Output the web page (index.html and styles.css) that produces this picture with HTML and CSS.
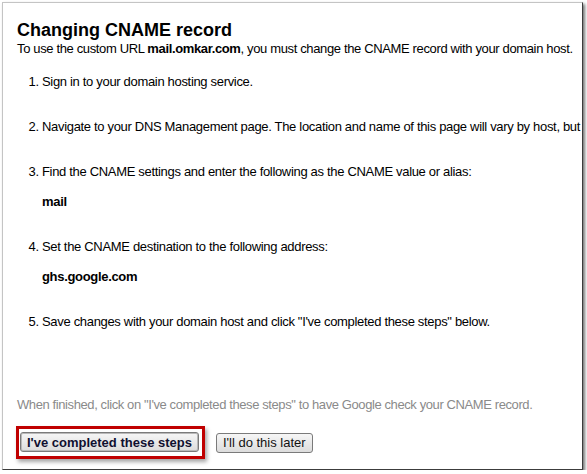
FILE: index.html
```html
<!DOCTYPE html>
<html lang="en">

<head>
    <meta charset="UTF-8">
    <title>Changing CNAME record</title>
    <link rel="stylesheet" href="styles.css">
</head>

<body>
    <div class="frame">
        <h1>Changing CNAME record</h1>
        <p class="intro">To use the custom URL <b>mail.omkar.com</b>, you must change the CNAME record with your domain host.</p>
        <ol class="steps">
            <li>Sign in to your domain hosting service.</li>
            <li>Navigate to your DNS Management page. The location and name of this page will vary by host, but</li>
            <li>Find the CNAME settings and enter the following as the CNAME value or alias:
                <div class="value">mail</div>
            </li>
            <li>Set the CNAME destination to the following address:
                <div class="value">ghs.google.com</div>
            </li>
            <li>Save changes with your domain host and click "I've completed these steps" below.</li>
        </ol>
        <p class="finish">When finished, click on "I've completed these steps" to have Google check your CNAME record.</p>
        <div class="actions">
            <span class="highlight">
                <button class="btn btn-main">I've completed these steps</button>
            </span>
            <button class="btn">I'll do this later</button>
        </div>
    </div>
</body>

</html>
```

FILE: styles.css
```css
body {
    margin: 0;
    background: #fff;
    font-family: Arial, "Liberation Sans", sans-serif;
    font-size: 13px;
    color: #000;
}

.frame {
    box-sizing: border-box;
    margin: 2px 0 0 2px;
    width: 581px;
    height: 468px;
    padding: 0 0 0 14px;
    border: 1px solid #c4c4c4;
    border-right-color: #3c3c3c;
    border-bottom-color: #3c3c3c;
    box-shadow: 2px 2px 3px rgba(0, 0, 0, 0.55);
    overflow: hidden;
}

h1 {
    font-size: 18px;
    line-height: 22px;
    margin: 16px 0 0;
}

.intro {
    margin: 0;
    line-height: 15px;
    letter-spacing: -0.36px;
    white-space: nowrap;
}

.steps {
    margin: 18px 0 0;
    padding-left: 25px;
    line-height: 15px;
    letter-spacing: -0.32px;
}

.steps li {
    margin-bottom: 30px;
    white-space: nowrap;
}

.steps li:last-child {
    margin-bottom: 0;
}

.value {
    margin-top: 15px;
    font-weight: bold;
}

.finish {
    margin: 68px 0 0;
    line-height: 15px;
    letter-spacing: -0.4px;
    color: #8a8a8a;
}

.actions {
    display: flex;
    align-items: center;
    gap: 11px;
    margin: 14px 0 0 -1px;
}

.highlight {
    display: flex;
    padding: 3px 3px 4px 1px;
    border: 3px solid #c00000;
    box-shadow: 2px 3px 4px rgba(0, 0, 0, 0.35);
}

.btn {
    height: 20px;
    padding: 0 6px;
    font-family: Arial, "Liberation Sans", sans-serif;
    font-size: 13px;
    color: #111;
    border: 1px solid #7a7a7a;
    border-radius: 3px;
    background: linear-gradient(#f6f6f6, #dcdcdc);
}

.btn-main {
    font-weight: bold;
    color: #101030;
    box-shadow: inset 0 0 0 1px #b8b8b8;
}
```
